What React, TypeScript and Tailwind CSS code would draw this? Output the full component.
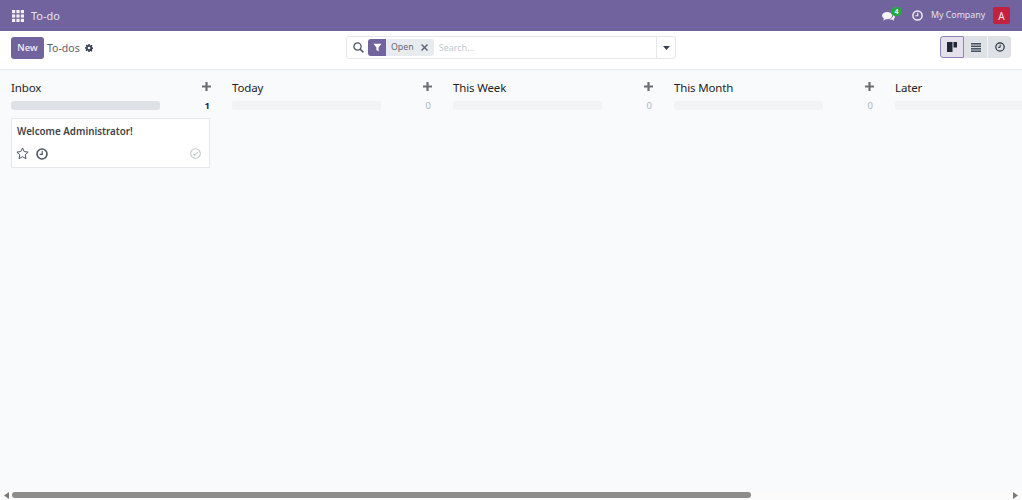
import React from "react";

function Plus() {
  return (
    <svg width="9" height="9" viewBox="0 0 9 9" className="block">
      <path d="M3.4 0h2.2v3.4H9v2.2H5.6V9H3.4V5.6H0V3.4h3.4z" fill="#6b6f75" />
    </svg>
  );
}

function Clock({ size = 12, color = "#374151", sw = 1.6 }: { size?: number; color?: string; sw?: number }) {
  return (
    <svg width={size} height={size} viewBox="0 0 12 12" className="block" fill="none">
      <circle cx="6" cy="6" r="5" stroke={color} strokeWidth={sw} />
      <path d="M6.2 3v3.3H3.6" stroke={color} strokeWidth="1.2" />
    </svg>
  );
}

function Column({ title, count, active, children }: { title: string; count: number; active?: boolean; children?: React.ReactNode }) {
  return (
    <div className="w-[200px] shrink-0">
      <div className="mt-[8px] flex h-[17px] items-center justify-between">
        <span className="text-[11.5px] leading-[17px] tracking-[-0.15px] text-[#1f2328]">{title}</span>
        <span className="-mt-[2px]"><Plus /></span>
      </div>
      <div className="mt-[5px] flex h-[9px] items-center">
        <div className={`h-[9px] w-[149px] shrink-0 rounded-[3px] ${active ? "bg-[#dee2e6]" : "bg-[#f1f3f5]"}`} />
        <span className={`ml-auto mr-[1px] text-[9.5px] leading-none ${active ? "font-bold text-[#1f2a44]" : "text-[#adb5bd]"}`}>{count}</span>
      </div>
      {children}
    </div>
  );
}

export default function App() {
  return (
    <div className="flex h-[500px] w-[1022px] flex-col overflow-hidden bg-[#f9fafb] font-['Noto_Sans',sans-serif]">
      <header className="flex h-[31px] shrink-0 items-center bg-[#71639e] px-[12px] text-white">
        <svg width="12" height="12" viewBox="0 0 12 12" className="block" fill="#f3f1f7">
          {[0, 4.4, 8.8].flatMap((y) =>
            [0, 4.4, 8.8].map((x) => <rect key={`${x}-${y}`} x={x} y={y} width="3.2" height="3.2" />)
          )}
        </svg>
        <span className="ml-[7px] text-[11px] leading-none text-[#e6e2ef]">To-do</span>
        <div className="ml-auto flex items-center">
          <span className="relative mt-[1px] block h-[11px] w-[13px]">
            <svg width="13" height="11" viewBox="0 0 14 12" className="block" fill="#f5f3f9">
              <ellipse cx="5.5" cy="5" rx="5.5" ry="4" />
              <path d="M2 7.5 1.5 10.5 5 8.5z" />
              <path d="M11.5 3.2c1.5.6 2.5 1.7 2.5 3 0 1-.6 1.8-1.4 2.4l.5 2-2.6-1.4c-.9.1-2 0-2.8-.3 2.5-.3 4.4-2 4.4-4.2 0-.5-.2-1-.6-1.5z" />
            </svg>
            <span className="absolute left-[9px] -top-[4px] flex h-[9px] w-[11px] items-center justify-center rounded-full bg-[#28a745] text-[7px] leading-none font-semibold text-white">4</span>
          </span>
          <span className="ml-[17px]"><Clock size={11} color="#f0eef5" sw={1.6} /></span>
          <span className="ml-[8px] w-[54px] text-[8.8px] leading-none whitespace-nowrap text-[#e4e0ec]">My Company</span>
          <span className="ml-[8px] flex h-[17px] w-[17px] items-center justify-center rounded-[2px] bg-[#c4203f] text-[10px] leading-none text-[#fbe9ec]">A</span>
        </div>
      </header>

      <div className="flex h-[39px] shrink-0 items-start border-b border-[#eceef0] bg-white px-[11px] pt-[5px]">
        <div className="mt-[1px] flex h-[22px] w-[335px] shrink-0 items-center">
          <button className="flex h-[22px] w-[33px] items-center justify-center rounded-[3px] bg-[#71639e] text-[9.5px] leading-none font-medium text-[#f4f2f8]">New</button>
          <span className="ml-[3px] text-[10.5px] leading-none text-[#5a6068]">To-dos</span>
          <svg width="8" height="8" viewBox="0 0 24 24" className="ml-[5px] block" fill="#374151">
            <path fillRule="evenodd" d="M10 0h4l.7 3.4 2 .8 2.9-1.9 2.8 2.8-1.9 2.9.8 2 3.4.7v4l-3.4.7-.8 2 1.9 2.9-2.8 2.8-2.9-1.9-2 .8L14 24h-4l-.7-3.4-2-.8-2.9 1.9-2.8-2.8 1.9-2.9-.8-2L0 14v-4l3.4-.7.8-2-1.9-2.9 2.8-2.8 2.9 1.9 2-.8zM12 8a4 4 0 1 0 0 8 4 4 0 0 0 0-8z" />
          </svg>
        </div>
        <div className="flex h-[23px] w-[330px] shrink-0 items-center rounded-[3px] border border-[#e5e7eb] bg-white">
          <svg width="11" height="11" viewBox="0 0 11 11" className="ml-[6px] block shrink-0" fill="none" stroke="#4b5563" strokeWidth="1.3">
            <circle cx="4.5" cy="4.5" r="3.6" />
            <path d="m7.2 7.2 3.2 3.2" strokeWidth="1.5" />
          </svg>
          <div className="ml-[4px] flex h-[17px] items-center rounded-[3px] bg-[#e9ecef]">
            <span className="flex h-[17px] w-[18px] items-center justify-center rounded-l-[3px] bg-[#71639e]">
              <svg width="9" height="9" viewBox="0 0 9 9" className="block" fill="#fff">
                <path d="M.5.8h8L5.6 4.6V8.4L3.4 7V4.6z" />
              </svg>
            </span>
            <span className="ml-[5px] text-[8.8px] leading-none text-[#5f6873]">Open</span>
            <svg width="7" height="7" viewBox="0 0 7 7" className="ml-[7px] mr-[6px] block" stroke="#5f6873" strokeWidth="1.5">
              <path d="m.5.5 6 6m0-6-6 6" />
            </svg>
          </div>
          <span className="ml-[5px] text-[9px] leading-none text-[#c4c9cf]">Search...</span>
          <span className="ml-auto flex h-full w-[19px] items-center justify-center border-l border-[#e5e7eb]">
            <svg width="7" height="4" viewBox="0 0 7 4" className="block" fill="#374151"><path d="M0 0h7L3.5 4z" /></svg>
          </span>
        </div>
        <div className="ml-auto flex h-[22px]">
          <span className="flex w-[24px] items-center justify-center rounded-l-[3px] border border-[#8f84b5] bg-[#e4e1ed]">
            <svg width="10" height="10" viewBox="0 0 10 10" className="block" fill="#1f2937">
              <rect x="0" y="0" width="5.5" height="10" /><rect x="6.5" y="0" width="3.5" height="5.5" />
            </svg>
          </span>
          <span className="flex w-[24px] items-center justify-center border-r border-[#f3f4f6] bg-[#dee2e6]">
            <svg width="10" height="9" viewBox="0 0 10 9" className="block" fill="#4b5563">
              <rect y="0" width="10" height="1.6" /><rect y="2.5" width="10" height="1.6" /><rect y="5" width="10" height="1.6" /><rect y="7.4" width="10" height="1.6" />
            </svg>
          </span>
          <span className="flex w-[23px] items-center justify-center rounded-r-[3px] bg-[#dee2e6]">
            <Clock size={10} color="#1f2937" sw={1.4} />
          </span>
        </div>
      </div>

      <main className="flex min-h-0 flex-1 gap-[21px] overflow-hidden border-t border-[#f1f2f4] pl-[11px]">
        <Column title="Inbox" count={1} active>
          <div className="mt-[8px] h-[50px] w-[199px] border border-[#e5e7eb] bg-white pl-[5px] pr-[8px]">
            <div className="mt-[6px] text-[9.8px] leading-[14px] font-semibold text-[#3f444b]">Welcome Administrator!</div>
            <div className="mt-[8px] flex items-center">
              <svg width="13" height="13" viewBox="0 0 13 13" className="-ml-[1px] block" fill="none" stroke="#4b5563" strokeWidth="1">
                <path d="m6.5 1 1.7 3.6 3.9.5-2.9 2.7.8 3.9-3.5-2-3.5 2 .8-3.9L.9 5.1l3.9-.5z" />
              </svg>
              <span className="ml-[7px]"><Clock size={12} color="#4b5563" sw={1.6} /></span>
              <svg width="11" height="11" viewBox="0 0 11 11" className="ml-auto block" fill="none" stroke="#c3c9cf" strokeWidth="1.1">
                <circle cx="5.5" cy="5.5" r="4.8" />
                <path d="m3.3 5.6 1.6 1.6 3-3" />
              </svg>
            </div>
          </div>
        </Column>
        <Column title="Today" count={0} />
        <Column title="This Week" count={0} />
        <Column title="This Month" count={0} />
        <Column title="Later" count={0} />
      </main>

      <div className="flex h-[10px] shrink-0 items-center bg-[#fbfbfc]">
        <svg width="5" height="7" viewBox="0 0 5 7" className="ml-[4px] block" fill="#7a7a7a"><path d="M5 0v7L0 3.5z" /></svg>
        <div className="ml-[3px] h-[6px] w-[739px] rounded-full bg-[#8c8c8c]" />
        <svg width="5" height="7" viewBox="0 0 5 7" className="ml-auto mr-[4px] block" fill="#7a7a7a"><path d="M0 0v7l5-3.5z" /></svg>
      </div>
    </div>
  );
}
